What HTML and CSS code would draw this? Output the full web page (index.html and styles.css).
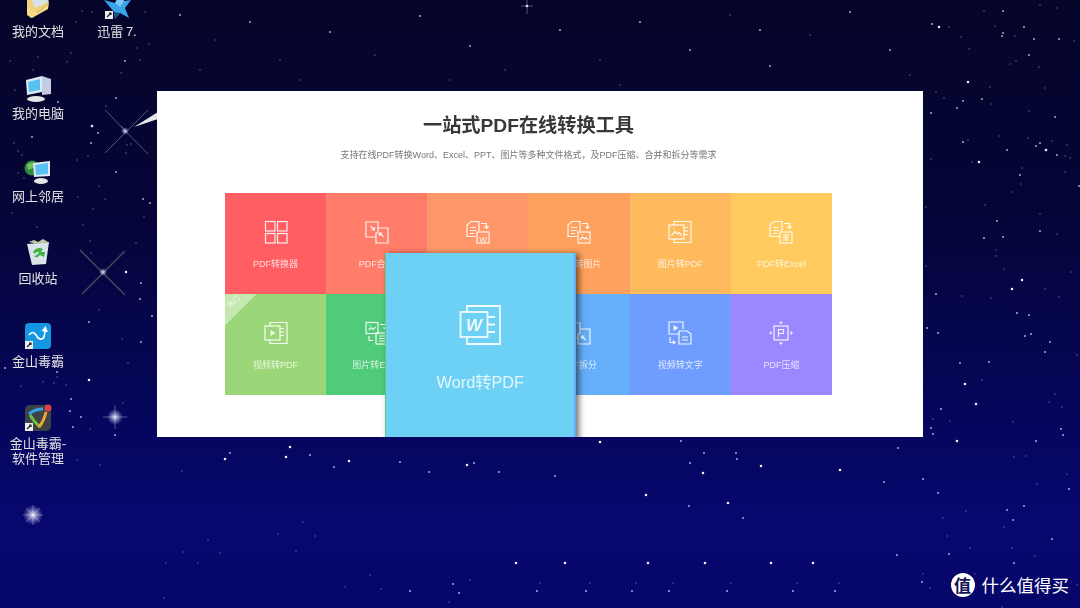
FILE: index.html
```html
<!DOCTYPE html>
<html lang="zh-CN">
<head>
  <meta charset="UTF-8">
  <title>一站式PDF在线转换工具</title>
  <link rel="stylesheet" href="styles.css">
</head>
<body>

  <div class="desktop">

    <!-- starfield: every star is a zero length round-capped segment -->
    <svg class="stars" width="1080" height="608" viewBox="0 0 1080 608">
      <defs>
        <radialGradient id="glow">
          <stop offset="0" stop-color="#fff" stop-opacity=".9"/>
          <stop offset="1" stop-color="#b8b8ff" stop-opacity="0"/>
        </radialGradient>
      </defs>
      <path class="star-big" d="M939 27h0M979 162h0M968 82h0M1046 150h0M1022 280h0M1012 289h0M965 384h0M976 404h0M957 441h0M286 457h0M290 447h0M349 461h0M225 459h0M646 495h0M728 503h0M840 470h0M761 466h0M516 563h0M565 563h0M648 563h0M705 563h0M771 563h0M813 563h0M92 126h0M126 272h0M89 380h0M600 442h0M467 465h0M703 473h0M527 6h0"/>
      <path class="star-mid" d="M932 24h0M1003 11h0M1024 27h0M1003 33h0M1002 36h0M1034 39h0M1059 39h0M1029 55h0M963 101h0M982 99h0M957 108h0M931 113h0M1055 117h0M963 142h0M1040 143h0M1036 146h0M1007 150h0M1057 155h0M1020 175h0M1079 186h0M997 221h0M1040 231h0M1003 237h0M984 238h0M936 294h0M927 328h0M938 333h0M1017 313h0M1029 315h0M1025 336h0M1031 334h0M1050 342h0M1045 352h0M960 363h0M989 362h0M941 409h0M931 428h0M933 434h0M1061 429h0M1063 435h0M1036 441h0M923 479h0M938 493h0M1069 489h0M1007 510h0M1024 506h0M1013 520h0M1052 539h0M949 554h0M1014 563h0M310 455h0M230 453h0M334 467h0M400 462h0M474 463h0M429 472h0M499 472h0M555 476h0M681 441h0M704 453h0M736 453h0M737 459h0M690 463h0M898 448h0M884 482h0M923 479h0M689 506h0M743 518h0M897 555h0M453 584h0M459 593h0M410 591h0M537 591h0M586 591h0M632 591h0M669 591h0M727 591h0M793 591h0M835 591h0M922 582h0M125 61h0M116 98h0M58 102h0M98 133h0M32 137h0M116 172h0M143 199h0M150 203h0M91 143h0M141 283h0M140 299h0M152 316h0M89 322h0M141 342h0M5 368h0M57 372h0M71 399h0M81 417h0M73 427h0M115 435h0M70 411h0M180 15h0M250 22h0M330 32h0M420 16h0M470 46h0M560 30h0M640 22h0M690 50h0M770 66h0M850 12h0M890 50h0M760 30h0"/>
      <path class="star-small" d="M949 27h0M961 37h0M984 11h0M1040 5h0M1057 8h0M995 26h0M1015 36h0M1074 41h0M969 49h0M1016 61h0M1010 64h0M1039 67h0M990 87h0M1045 88h0M936 92h0M944 98h0M991 104h0M1029 111h0M968 140h0M999 136h0M1028 138h0M1052 141h0M1067 145h0M1065 156h0M1070 158h0M931 159h0M972 162h0M1022 168h0M1065 172h0M1021 184h0M1012 192h0M985 205h0M926 207h0M1040 214h0M1057 234h0M996 250h0M996 256h0M926 266h0M1004 269h0M1071 272h0M1045 289h0M962 296h0M991 298h0M1059 297h0M1077 355h0M982 380h0M1055 394h0M1049 402h0M1062 407h0M933 419h0M950 421h0M1013 422h0M1014 457h0M1026 456h0M1067 474h0M1037 484h0M966 511h0M943 518h0M1004 527h0M947 536h0M970 548h0M1012 548h0M1035 556h0M923 574h0M975 574h0M930 588h0M1077 585h0M1002 607h0M182 471h0M470 580h0M449 602h0M540 583h0M590 583h0M636 583h0M673 583h0M731 583h0M797 583h0M839 583h0M303 522h0M278 534h0M315 536h0M208 540h0M183 552h0M220 553h0M296 551h0M166 563h0M198 563h0M370 575h0M345 587h0M381 589h0M164 598h0M10 61h0M71 53h0M67 62h0M33 70h0M38 57h0M140 60h0M121 73h0M15 90h0M106 106h0M14 143h0M18 151h0M22 155h0M88 156h0M77 160h0M18 173h0M24 178h0M99 186h0M78 197h0M105 199h0M93 209h0M12 213h0M144 217h0M37 227h0M83 225h0M82 11h0M92 12h0M76 22h0M145 12h0M137 48h0M149 44h0M122 127h0M127 145h0M131 144h0M126 153h0M90 241h0M91 253h0M136 243h0M99 310h0M122 339h0M128 363h0M57 377h0M21 386h0M43 382h0M54 383h0M66 385h0M123 403h0M90 429h0M100 465h0M77 460h0M215 40h0M280 60h0M375 55h0M505 70h0M600 60h0M730 15h0M810 35h0M910 75h0M200 70h0M300 80h0M450 80h0M620 85h0"/>

      <!-- flares -->
      <g class="flare">
        <path d="M105 110L148 154M105 153L148 110"/>
        <path class="flare-streak" d="M134 127L158 112L158 119Z"/>
        <path class="flare-warm" d="M80 250L125 295M125 251L82 294"/>
        <path d="M115 405V429M103 417H127" opacity=".5"/>
        <path d="M33 505V525M23 515H43M26 508L40 522M40 508L26 522" opacity=".25"/>
        <path d="M527 0V14M521 6H533" opacity=".6"/>
      </g>
      <circle cx="125" cy="131" r="4" fill="url(#glow)"/>
      <circle cx="103" cy="272" r="4" fill="url(#glow)"/>
      <circle cx="115" cy="417" r="8" fill="url(#glow)"/>
      <circle cx="33" cy="515" r="10" fill="url(#glow)"/>
    </svg>

    <div class="icon-grid">

      <div class="desk-icon">
        <svg viewBox="0 0 32 32" width="32" height="32">
          <path d="M5 6L24 0L27 13L9 28L5 24Z" fill="#efd27a"/>
          <path d="M9 8L23 2L26 12L13 18Z" fill="#d5e4ea"/>
          <path d="M5 16L15 23L27 13L26 19L10 28L5 25Z" fill="#f7dc88"/>
        </svg>
        <span class="desk-label">我的文档</span>
      </div>

      <div class="desk-icon">
        <svg viewBox="0 0 32 32" width="32" height="32">
          <path d="M3 10L14 13L20 2L23 11L30 10L24 18L28 28L19 23L14 29L13 22Z" fill="#3aa4e8"/>
          <path d="M14 13L20 2L23 11L19 17Z" fill="#7cc8f2"/>
          <path d="M13 22L19 23L14 29Z" fill="#1b4f86"/>
          <rect x="4" y="21" width="8" height="8" fill="#eee"/>
          <path d="M6 27L10 23M8 23H10V25" stroke="#222" stroke-width="1.2" fill="none"/>
        </svg>
        <span class="desk-label">迅雷 7.</span>
      </div>

      <div class="desk-icon">
        <svg viewBox="0 0 32 32" width="32" height="32">
          <path d="M20 4L29 7V22L20 23Z" fill="#c4cbe0"/>
          <path d="M4 8L20 4V20L5 23Z" fill="#dfe8f5"/>
          <path d="M6 10L18 7V18L7 20Z" fill="#57c1f2"/>
          <ellipse cx="14" cy="27" rx="9" ry="3" fill="#e4e6ea"/>
        </svg>
        <span class="desk-label">我的电脑</span>
      </div>

      <div class="desk-icon desk-spacer"></div>

      <div class="desk-icon">
        <svg viewBox="0 0 32 32" width="32" height="32">
          <circle cx="10" cy="13" r="7.500" fill="#2d8a3e"/>
          <path d="M5 10Q9 6 13 8L11 13L6 15Z" fill="#74c25a"/>
          <path d="M11 8L28 6V21L12 22Z" fill="#dfe8f5"/>
          <path d="M13 10L26 8V19L14 20Z" fill="#57c1f2"/>
          <ellipse cx="19" cy="26" rx="7" ry="3" fill="#e4e6ea"/>
        </svg>
        <span class="desk-label">网上邻居</span>
      </div>

      <div class="desk-icon desk-spacer"></div>

      <div class="desk-icon">
        <svg viewBox="0 0 32 32" width="32" height="32">
          <path d="M5 7L27 5L24 27L10 28Z" fill="#d9e4ea"/>
          <path d="M7 5L12 3L16 5L21 2L26 5L16 7Z" fill="#c6c8a0"/>
          <path d="M11 15Q15 9 21 12L19 15L23 15L22 20L18 18Q15 22 12 19Q16 18 17 15Q14 14 13 17Z" fill="#3fb443"/>
        </svg>
        <span class="desk-label">回收站</span>
      </div>

      <div class="desk-icon desk-spacer"></div>

      <div class="desk-icon">
        <svg viewBox="0 0 32 32" width="32" height="32">
          <rect x="3" y="3" width="26" height="26" rx="4" fill="#1496e0"/>
          <path d="M7 15Q11 10 14 15T20 19T23 9" stroke="#fff" stroke-width="1.7" fill="none"/>
          <path d="M19.500 11L23.500 6L26 12Z" fill="#fff"/>
          <rect x="3" y="21" width="8" height="8" fill="#eee"/>
          <path d="M5 27L9 23M7 23H9V25" stroke="#222" stroke-width="1.2" fill="none"/>
        </svg>
        <span class="desk-label">金山毒霸</span>
      </div>

      <div class="desk-icon desk-spacer"></div>

      <div class="desk-icon">
        <svg viewBox="0 0 32 32" width="32" height="32">
          <rect x="3" y="3" width="26" height="26" rx="5" fill="#3d4148"/>
          <path d="M7 12Q13 7 21 7" stroke="#35a5e6" stroke-width="3" fill="none"/>
          <path d="M8 13Q12 20 18 25" stroke="#72c13a" stroke-width="3" fill="none"/>
          <path d="M24 10Q22 19 17 25" stroke="#f0a62c" stroke-width="3" fill="none"/>
          <circle cx="26" cy="6" r="3.500" fill="#e0413d"/>
          <rect x="3" y="21" width="8" height="8" fill="#eee"/>
          <path d="M5 27L9 23M7 23H9V25" stroke="#222" stroke-width="1.2" fill="none"/>
        </svg>
        <span class="desk-label">金山毒霸-</span>
        <span class="desk-label desk-label-next">软件管理</span>
      </div>

    </div>

    <div class="panel">
      <h1>一站式PDF在线转换工具</h1>
      <p class="subtitle">支持在线PDF转换Word、Excel、PPT、图片等多种文件格式&#65292;及PDF压缩、合并和拆分等需求</p>

      <div class="tools">

        <div class="tile c1">
          <svg class="tile-icon" viewBox="0 0 26 26">
            <rect x="2.500" y="2.500" width="9.500" height="9.500"/><rect x="14.500" y="2.500" width="9.500" height="9.500"/>
            <rect x="2.500" y="14.500" width="9.500" height="9.500"/><rect x="14.500" y="14.500" width="9.500" height="9.500"/>
          </svg>
          <span>PDF转换器</span>
        </div>

        <div class="tile c2">
          <svg class="tile-icon" viewBox="0 0 26 26">
            <path d="M2 3H14V9H24V24H12V18H2Z"/>
            <path d="M14 9V14H12V18M6.500 7L10.500 11M10.500 8V11H7.500M19.500 18L15.500 14M15.500 17V14H18.500"/>
          </svg>
          <span>PDF合并</span>
        </div>

        <div class="tile c3">
          <svg class="tile-icon" viewBox="0 0 26 26">
            <path d="M11 17.500H2V6L6 2.500H14V12"/><path d="M5 8.500H11M5 11.500H11M5 14.500H9"/>
            <path d="M16 4.500H21.500V9M19.500 7.500L21.500 9.500L23.500 7.500"/>
            <rect x="12" y="13" width="12" height="11"/>
            <text class="glyph" x="18" y="22.500">W</text>
          </svg>
          <span>PDF转Word</span>
        </div>

        <div class="tile c4">
          <svg class="tile-icon" viewBox="0 0 26 26">
            <path d="M11 17.500H2V6L6 2.500H14V12"/><path d="M5 8.500H11M5 11.500H11M5 14.500H9"/>
            <path d="M16 4.500H21.500V9M19.500 7.500L21.500 9.500L23.500 7.500"/>
            <rect x="12" y="13" width="12" height="11"/>
            <path d="M14 21L16.500 18L18.500 20L20 18.500L22 21"/><path d="M15.500 15.500h1.500"/>
          </svg>
          <span>PDF转图片</span>
        </div>

        <div class="tile c5">
          <svg class="tile-icon" viewBox="0 0 26 26">
            <path d="M7 6V2.500H24V23.500H7V20"/>
            <rect x="2" y="6" width="15" height="14"/>
            <path d="M4.500 16.500L8 12.500L10.500 15L12 13.500L14.500 16.500M6 9.500h1.500"/>
            <path d="M17 8.500H21M17 12H21M17 15.500H21"/>
          </svg>
          <span>图片转PDF</span>
        </div>

        <div class="tile c6">
          <svg class="tile-icon" viewBox="0 0 26 26">
            <path d="M11 17.500H2V6L6 2.500H14V12"/><path d="M5 8.500H11M5 11.500H11M5 14.500H9"/>
            <path d="M16 4.500H21.500V9M19.500 7.500L21.500 9.500L23.500 7.500"/>
            <rect x="12" y="13" width="12" height="11"/>
            <path d="M15 16H21M15 18.500H21M15 21H21M18 16V21"/>
          </svg>
          <span>PDF转Excel</span>
        </div>

        <div class="tile c7">
          <span class="hot"><b>热门</b></span>
          <svg class="tile-icon" viewBox="0 0 26 26">
            <path d="M7 6V2.500H24V23.500H7V20"/>
            <rect x="2" y="6" width="15" height="14"/>
            <path class="solid" d="M7.500 10L12.500 13L7.500 16Z"/>
            <path d="M17 8.500H21M17 12H21M17 15.500H21"/>
          </svg>
          <span>视频转PDF</span>
        </div>

        <div class="tile c8">
          <svg class="tile-icon" viewBox="0 0 26 26">
            <rect x="2" y="2.500" width="12" height="11"/>
            <path d="M4.500 10L7 7.500L9 9.500L11.500 7M5.500 5.500h1"/>
            <path d="M16 4.500H21.500V9M19.500 7.500L21.500 9.500L23.500 7.500"/>
            <path d="M5 16V20.500H9"/>
            <rect x="12" y="13" width="12" height="11"/>
            <path d="M15 16H21M15 18.500H21M15 21H21"/>
          </svg>
          <span>图片转Excel</span>
        </div>

        <div class="tile c9">
          <div class="tile-popup">
            <svg class="popup-icon" viewBox="0 0 42 42">
              <path d="M8 8V2H41V40H8V33"/>
              <rect x="1.500" y="8" width="27" height="25"/>
              <text class="popup-glyph" x="15" y="26.500">W</text>
              <path d="M29 13H36M29 20.500H36M29 28H36"/>
            </svg>
            <span>Word转PDF</span>
          </div>
        </div>

        <div class="tile c10">
          <svg class="tile-icon" viewBox="0 0 26 26">
            <path d="M2 3H14V9H24V24H12V18H2Z"/>
            <path d="M14 9V14H12V18M19.500 20L15.500 16M15.500 19V16H18.500M6 7L10 11"/>
          </svg>
          <span>PDF拆分</span>
        </div>

        <div class="tile c11">
          <svg class="tile-icon" viewBox="0 0 26 26">
            <path d="M13 14H2V2H16V9"/>
            <path class="solid" d="M6.500 5L11.500 8L6.500 11Z"/>
            <path d="M3 17V22.500H8M6 20.500L8 22.500L6 24"/>
            <path d="M12 11H20L24 14V24H12Z"/>
            <path d="M15 17H21M15 20H21"/>
          </svg>
          <span>视频转文字</span>
        </div>

        <div class="tile c12">
          <svg class="tile-icon" viewBox="0 0 26 26">
            <rect x="6" y="6" width="14" height="14"/>
            <path d="M10.500 17V9.500H15.500V13.500H10.500"/>
            <path class="solid" d="M13 1L15 3.500H11ZM13 25L15 22.500H11ZM1 13L3.500 11V15ZM25 13L22.500 11V15Z"/>
          </svg>
          <span>PDF压缩</span>
        </div>

      </div>
    </div>

    <div class="watermark">
      <span class="watermark-logo">值</span>
      <span class="watermark-text">什么值得买</span>
    </div>

  </div>

</body>
</html>
```

FILE: styles.css
```css
* {
  box-sizing: border-box;
}

body {
  margin: 0;
  font-family: "Liberation Sans", "Noto Sans CJK SC", sans-serif;
  background: #05053a;
}

.desktop {
  position: relative;
  width: 1080px;
  height: 608px;
  overflow: hidden;
  background: linear-gradient(180deg, #05052a 0%, #050538 35%, #06065c 68%, #07076e 85%, #06066a 100%);
}

/* stars */
.stars {
  position: absolute;
  left: 0;
  top: 0;
}

.star-big, .star-mid, .star-small {
  fill: none;
  stroke: #eeeeff;
  stroke-linecap: round;
  filter: blur(.4px);
}

.star-big {
  stroke-width: 2.6;
}

.star-mid {
  stroke-width: 2;
  opacity: .7;
}

.star-small {
  stroke-width: 1.5;
  opacity: .4;
}

.flare {
  filter: blur(.7px);
}

.flare path {
  fill: none;
  stroke: #b9b9e0;
  stroke-width: 1;
  opacity: .45;
}

.flare .flare-streak {
  fill: #fff;
  stroke: none;
  opacity: .9;
}

.flare .flare-warm {
  stroke: #a8a67c;
  opacity: .4;
  stroke-width: 1.6;
}

/* desktop icons */
.icon-grid {
  position: absolute;
  left: -1px;
  top: -10px;
  display: grid;
  grid-template-columns: 78px 80px;
  grid-auto-rows: 82.400px;
}

.desk-icon {
  display: flex;
  flex-direction: column;
  align-items: center;
  filter: blur(.4px);
}

.desk-icon svg {
  flex: none;
  overflow: visible;
}

.desk-label {
  color: #e2e2e2;
  font-size: 13px;
  line-height: 15px;
  margin-top: 2px;
  text-align: center;
  white-space: nowrap;
  word-spacing: -1px;
}

.desk-label-next {
  margin-top: 0;
}

/* white window */
.panel {
  position: absolute;
  left: 157px;
  top: 91px;
  width: 766px;
  height: 346px;
  padding: 23px 91px 0 68px;
  background: #fff;
  overflow: hidden;
  filter: blur(.4px);
}

h1 {
  margin: 0;
  color: #383838;
  font-size: 19.200px;
  font-weight: 700;
  line-height: 24px;
  text-align: center;
}

.subtitle {
  margin: 10px 0 0;
  color: #777;
  font-size: 9px;
  line-height: 14px;
  text-align: center;
  white-space: nowrap;
}

.tools {
  display: grid;
  grid-template-columns: repeat(6, 1fr);
  grid-auto-rows: 101px;
  margin-top: 31px;
}

.tile {
  position: relative;
  display: flex;
  flex-direction: column;
  align-items: center;
  padding-top: 26px;
  color: rgba(255, 255, 255, .78);
  font-size: 9px;
  line-height: 12px;
}

.tile-icon {
  width: 26px;
  height: 26px;
  margin-bottom: 13px;
}

.tile-icon path, .tile-icon rect, .popup-icon path, .popup-icon rect {
  fill: none;
  stroke: rgba(255, 255, 255, .9);
  stroke-width: 1.2;
}

.tile-icon .solid {
  fill: rgba(255, 255, 255, .9);
  stroke: none;
}

.glyph {
  fill: rgba(255, 255, 255, .9);
  font-size: 8px;
  text-anchor: middle;
}

.c1 { background: #ff5e62; }
.c2 { background: #ff7d69; }
.c3 { background: #ff9769; }
.c4 { background: #ffa15e; }
.c5 { background: #ffba5e; }
.c6 { background: #ffca5e; }
.c7 { background: #9bd778; }
.c8 { background: #4fcb79; }
.c9 { background: #5cc0e0; }
.c10 { background: #65aef9; }
.c11 { background: #6f9cff; }
.c12 { background: #9b87ff; }

/* hot ribbon in the corner of a tile */
.hot {
  position: absolute;
  left: 0;
  top: 0;
  width: 32px;
  height: 32px;
  background: linear-gradient(135deg, rgba(255, 255, 255, .42) 50%, transparent 50%);
}

.hot b {
  position: absolute;
  left: 2px;
  top: 3px;
  font-size: 7px;
  font-weight: 400;
  line-height: 10px;
  transform: rotate(-45deg);
}

.tile-popup {
  position: absolute;
  left: -42px;
  top: -41px;
  z-index: 2;
  display: flex;
  flex-direction: column;
  align-items: center;
  width: 191px;
  height: 230px;
  padding-top: 51px;
  background: #6dd0f5;
  border-left: 1px solid #62c98a;
  border-right: 2px solid #6aaaf0;
  box-shadow: 3px 1px 6px rgba(0, 0, 0, .55);
  color: rgba(255, 255, 255, .82);
  font-size: 16.300px;
  line-height: 22px;
}

.popup-icon {
  width: 42px;
  height: 42px;
  margin-bottom: 25px;
}

.popup-icon path, .popup-icon rect {
  stroke-width: 1.8;
}

.popup-glyph {
  fill: rgba(255, 255, 255, .9);
  font-size: 17px;
  font-weight: 700;
  font-style: italic;
  text-anchor: middle;
}

/* watermark */
.watermark {
  position: absolute;
  right: 11px;
  bottom: 11px;
  display: flex;
  align-items: center;
  gap: 7px;
}

.watermark-logo {
  width: 24px;
  height: 24px;
  border-radius: 50%;
  background: #fff;
  color: #14145a;
  font-family: "Noto Sans CJK SC", sans-serif;
  font-size: 17px;
  font-weight: 700;
  line-height: 24px;
  text-align: center;
}

.watermark-text {
  color: #fff;
  font-family: "Noto Sans CJK SC", sans-serif;
  font-size: 17.500px;
  line-height: 24px;
}
```
